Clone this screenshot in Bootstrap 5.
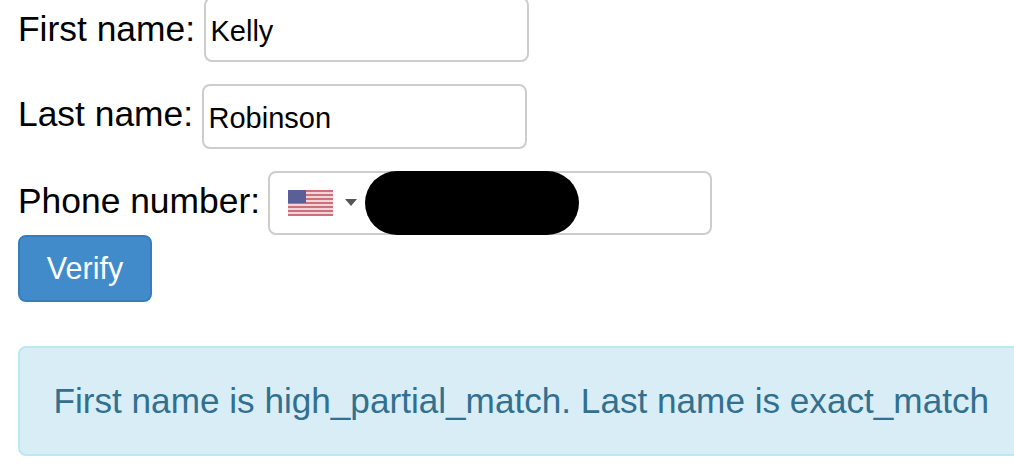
<!DOCTYPE html>
<html lang="en">
<head>
<meta charset="utf-8">
<title>Verify</title>
<link href="https://cdn.jsdelivr.net/npm/bootstrap@5.3.0/dist/css/bootstrap.min.css" rel="stylesheet">
<style>
html,body{height:472px;overflow:hidden}
body{font-family:"Liberation Sans",Arial,sans-serif;color:#000;background:#fff;padding-left:18px}
.form-wrap{margin-top:-3px}
.name-row{height:65px;font-size:35.4px;line-height:40px}
.name-row label{margin:0}
.gap-first{margin-bottom:22px}
.gap-last{margin-bottom:21px}
.txt-field.form-control{height:65px;border:2.5px solid #cdcdcd;border-radius:8px;padding:3px 4px 0 4.5px;font-size:29px;color:#000;box-shadow:none}
.first-lab{width:186px;padding-bottom:2px}
.last-lab{width:184px;padding-bottom:6px}
.first-field.form-control{width:325px}
.last-field.form-control{width:325px}
.phone-lab{width:250px;padding-bottom:4px}
.phone-field{width:444px;height:64px;border:2.5px solid #cdcdcd;border-radius:8px;background:#fff}
.flag-svg{margin-left:18px;width:45px;height:26px;display:block}
.caret-tri{margin-left:12px;width:0;height:0;border-left:6px solid transparent;border-right:6px solid transparent;border-top:7px solid #555}
.redact-pill{margin-left:8px;width:214px;height:64px;background:#000;border-radius:32px}
.btn.verify-btn{width:134px;height:67px;background:#428bca;border:2px solid #357ebd;border-radius:8px;color:#fff;font-size:30.5px;line-height:1;padding:0 0 1px}
.alert.note-box{margin:44px -30px 0 0;height:110px;background:#d9edf7;border:2.5px solid #bce8f1;border-radius:8px;color:#31708f;font-size:35.15px;padding:0 0 0 33.5px}
</style>
</head>
<body>
<form class="form-wrap">
  <div class="name-row gap-first d-flex align-items-center">
    <label class="first-lab" for="fn">First name:</label>
    <input id="fn" class="form-control txt-field first-field" value="Kelly">
  </div>
  <div class="name-row gap-last d-flex align-items-center">
    <label class="last-lab" for="ln">Last name:</label>
    <input id="ln" class="form-control txt-field last-field" value="Robinson">
  </div>
  <div class="name-row d-flex align-items-center">
    <label class="phone-lab">Phone number:</label>
    <div class="phone-field d-flex align-items-center">
      <svg class="flag-svg" viewBox="0 0 45 26" aria-hidden="true">
        <rect width="45" height="26" fill="#f0d5d8"/>
        <g fill="#cf6f7a">
          <rect width="45" height="2"/><rect y="4" width="45" height="2"/><rect y="8" width="45" height="2"/><rect y="12" width="45" height="2"/><rect y="16" width="45" height="2"/><rect y="20" width="45" height="2"/><rect y="24" width="45" height="2"/>
        </g>
        <rect width="18" height="13" fill="#5b5f97"/>
      </svg>
      <span class="caret-tri"></span>
      <span class="redact-pill"></span>
    </div>
  </div>
  <button type="button" class="btn verify-btn d-block">Verify</button>
</form>
<div class="alert note-box d-flex align-items-center" role="alert">First name is high_partial_match. Last name is exact_match</div>
<script src="https://cdn.jsdelivr.net/npm/bootstrap@5.3.0/dist/js/bootstrap.bundle.min.js"></script>
</body>
</html>
